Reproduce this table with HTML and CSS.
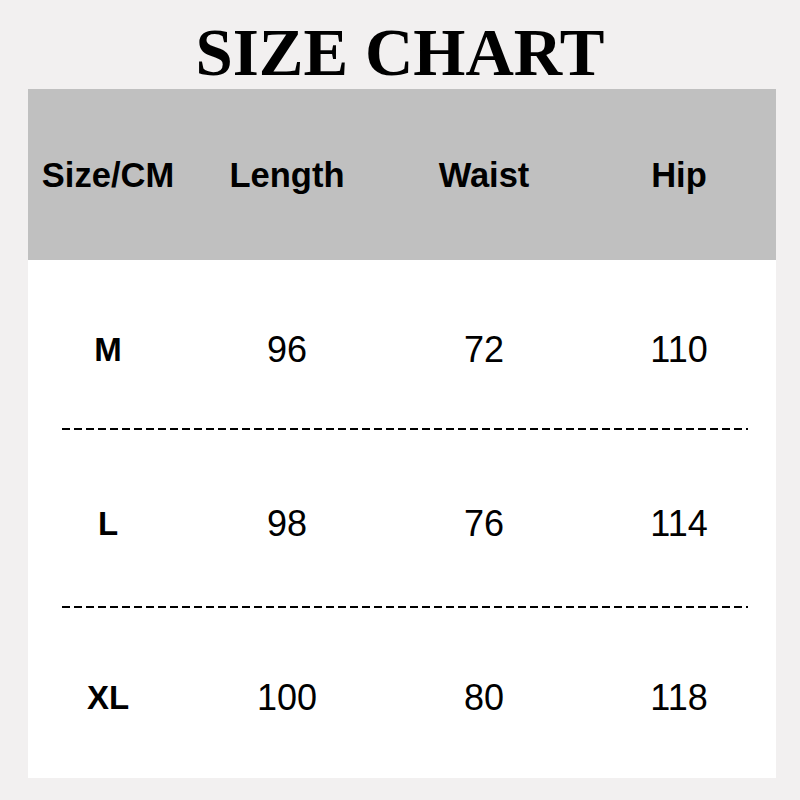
FILE: index.html
```html
<!DOCTYPE html>
<html>
<head>
<meta charset="utf-8">
<link rel="stylesheet" href="styles.css">
</head>
<body>
<div class="page">
  <h1 class="title">SIZE CHART</h1>
  <div class="chart">
    <div class="row head">
      <div class="cell">Size/CM</div>
      <div class="cell">Length</div>
      <div class="cell">Waist</div>
      <div class="cell">Hip</div>
    </div>
    <div class="body">
      <div class="row r1">
        <div class="cell size">M</div>
        <div class="cell">96</div>
        <div class="cell">72</div>
        <div class="cell">110</div>
      </div>
      <div class="sep"></div>
      <div class="row r2">
        <div class="cell size">L</div>
        <div class="cell">98</div>
        <div class="cell">76</div>
        <div class="cell">114</div>
      </div>
      <div class="sep"></div>
      <div class="row r3">
        <div class="cell size">XL</div>
        <div class="cell">100</div>
        <div class="cell">80</div>
        <div class="cell">118</div>
      </div>
    </div>
  </div>
</div>
</body>
</html>
```
FILE: styles.css
```css
html, body {
  margin: 0;
  padding: 0;
  background: #f2f0f0;
}
.page {
  width: 800px;
  height: 800px;
  display: flex;
  flex-direction: column;
}
.title {
  margin: 0;
  height: 89px;
  box-sizing: border-box;
  padding-top: 14px;
  text-align: center;
  font-family: "Liberation Serif", "Times New Roman", serif;
  font-weight: bold;
  font-size: 67px;
  line-height: normal;
  color: #000;
}
.chart {
  margin-left: 28px;
  width: 748px;
  height: 689px;
  display: flex;
  flex-direction: column;
  background: #fff;
}
.row {
  display: grid;
  grid-template-columns: 160px 198px 196px 194px;
  align-items: center;
  font-family: "Liberation Sans", Arial, sans-serif;
  color: #000;
}
.cell {
  text-align: center;
}
.head {
  height: 171px;
  background: #c0c0c0;
  font-weight: bold;
  font-size: 34.5px;
  padding-top: 2px;
  box-sizing: border-box;
}
.body {
  display: flex;
  flex-direction: column;
}
.body .row {
  font-size: 36px;
  box-sizing: border-box;
  padding-top: 11px;
}
.r1 { height: 168px; }
.r2 { height: 176px; }
.r3 { height: 169px; }
.size {
  font-weight: bold;
  font-size: 33px;
}
.sep {
  margin-left: 34px;
  width: 686px;
  height: 2px;
  background: repeating-linear-gradient(to right, #000 0, #000 8px, transparent 8px, transparent 12px);
}
```
